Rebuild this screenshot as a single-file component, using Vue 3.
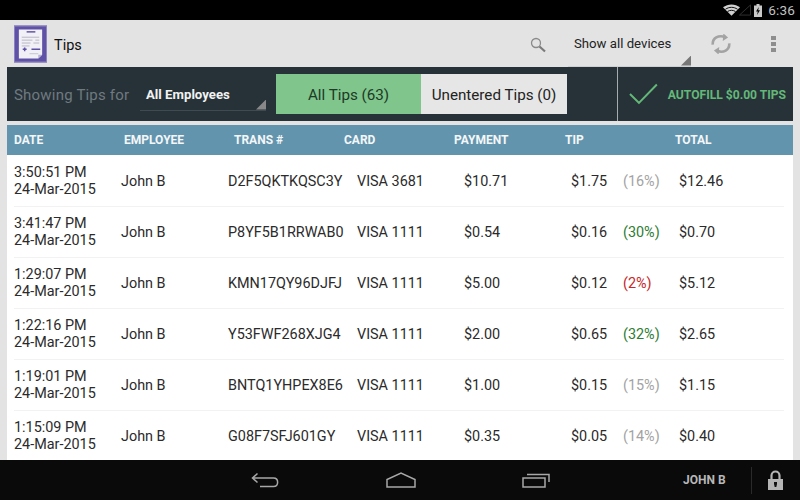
<script setup>
const headers = [
  { label: 'DATE', w: 110 }, { label: 'EMPLOYEE', w: 110 }, { label: 'TRANS #', w: 110 },
  { label: 'CARD', w: 110 }, { label: 'PAYMENT', w: 111 }, { label: 'TIP', w: 110 }, { label: 'TOTAL', w: 100 }
]
const rows = [
  ['3:50:51 PM', 'D2F5QKTKQSC3Y', 'VISA 3681', '$10.71', '$1.75', '(16%)', 'neutral', '$12.46'],
  ['3:41:47 PM', 'P8YF5B1RRWAB0', 'VISA 1111', '$0.54', '$0.16', '(30%)', 'good', '$0.70'],
  ['1:29:07 PM', 'KMN17QY96DJFJ', 'VISA 1111', '$5.00', '$0.12', '(2%)', 'bad', '$5.12'],
  ['1:22:16 PM', 'Y53FWF268XJG4', 'VISA 1111', '$2.00', '$0.65', '(32%)', 'good', '$2.65'],
  ['1:19:01 PM', 'BNTQ1YHPEX8E6', 'VISA 1111', '$1.00', '$0.15', '(15%)', 'neutral', '$1.15'],
  ['1:15:09 PM', 'G08F7SFJ601GY', 'VISA 1111', '$0.35', '$0.05', '(14%)', 'neutral', '$0.40']
].map(([time, trans, card, payment, tip, pct, tone, total]) => ({ time, trans, card, payment, tip, pct, tone, total }))
</script>

<template>
  <div class="screen">
    <header class="status">
      <svg width="17" height="12" viewBox="0 0 18 12" class="wifi"><path d="M9 12L0 3.2C5 -1 13 -1 18 3.2Z" fill="#d0d0d0"/><path d="M2.6 5.2C6.5 2.5 11.5 2.5 15.4 5.2M4.8 7.6C7.4 5.9 10.6 5.9 13.2 7.6" stroke="#000" stroke-width="1" fill="none"/></svg>
      <svg width="12" height="12" viewBox="0 0 13 12" class="signal"><path d="M0.5 11.5L12.5 0.5V11.5Z" fill="none" stroke="#333" stroke-width="1"/></svg>
      <svg width="8" height="13" viewBox="0 0 8 13" class="battery"><path d="M2.5 0h3v1.5H8V13H0V1.5h2.5Z" fill="#c9c9c9"/><path d="M4.8 3L2 7.6h1.8L3 11l3-4.8H4.2Z" fill="#000"/></svg>
      <span class="clock">6:36</span>
    </header>

    <div class="actionbar">
      <svg class="applogo" width="33" height="38" viewBox="0 0 34 38">
        <rect width="34" height="38" fill="#5f51a5"/>
        <rect x="0.5" y="0.5" width="33" height="37" fill="none" stroke="#8d84c0"/>
        <path d="M5 4H29V30L25 34H5Z" fill="#f1f0f6"/>
        <path d="M29 30L25 34V30Z" fill="#b9b4d6"/>
        <path d="M13 6.500H22" stroke="#5f51a5" stroke-width="1.500"/>
        <path d="M8 12H26M8 15H19M22 15H26M8 18H17M20 18H26M8 21H16" stroke="#a9a6b8" stroke-width="0.800"/>
        <path d="M9 24.500H13M11 22.500V26.500M18 24.500H27" stroke="#5f51a5" stroke-width="1.500"/>
        <path d="M16 29H25" stroke="#b9b7c6" stroke-width="0.800"/>
      </svg>
      <span class="title">Tips</span>
      <svg class="search" width="16" height="16" viewBox="0 0 16 16"><circle cx="6" cy="6" r="4.500" fill="none" stroke="#8a8a8a" stroke-width="1.300"/><path d="M9.500 9.500L15 14.500" stroke="#7a7a7a" stroke-width="2.200"/></svg>
      <div class="spinner devices"><span>Show all devices</span><i class="corner light"></i></div>
      <svg class="sync" width="20" height="20" viewBox="1.500 1.500 17 17" fill="none" stroke="#a3a3a3" stroke-width="2.200"><path d="M3 10.500C2.500 5 8 2 13.500 4.200"/><path d="M17 9.500C17.500 15 12 18 6.500 15.800"/><path d="M12 1L16 4.500L11.500 7.500Z" fill="#a3a3a3" stroke="none"/><path d="M8 19L4 15.500L8.500 12.500Z" fill="#a3a3a3" stroke="none"/></svg>
      <div class="overflow"><i></i><i></i><i></i></div>
    </div>

    <div class="filterbar">
      <span class="showing">Showing Tips for</span>
      <div class="spinner employees"><span>All Employees</span><i class="corner dark"></i></div>
      <div class="tabs">
        <div class="tab on">All Tips (63)</div>
        <div class="tab">Unentered Tips (0)</div>
      </div>
      <div class="autofill">
        <svg width="30" height="22" viewBox="0 0 30 22"><path d="M1 11L10 20L28 1.500" fill="none" stroke="#63b878" stroke-width="2"/></svg>
        <span>AUTOFILL $0.00 TIPS</span>
      </div>
    </div>

    <div class="tablehead">
      <span v-for="h in headers" :key="h.label" :style="{ width: h.w + 'px' }">{{ h.label }}</span>
    </div>

    <main class="rows">
      <div v-for="r in rows" :key="r.trans" class="row">
        <div class="c date">{{ r.time }}<br>24-Mar-2015</div>
        <div class="c emp">John B</div>
        <div class="c trans">{{ r.trans }}</div>
        <div class="c card">{{ r.card }}</div>
        <div class="c pay">{{ r.payment }}</div>
        <div class="c tip">{{ r.tip }}</div>
        <div class="c pct" :class="r.tone">{{ r.pct }}</div>
        <div class="c total">{{ r.total }}</div>
      </div>
    </main>

    <footer class="nav">
      <div class="navicons">
        <svg width="28" height="16" viewBox="0 0 28 16" fill="none" stroke="#a8a8a8" stroke-width="1.500"><path d="M6.500 1.500L1.500 6L6.500 10.500M1.500 6H22.500C28 6 28 14.500 22.500 14.500H9"/></svg>
        <svg width="30" height="16" viewBox="0 0 30 16" fill="none" stroke="#a8a8a8" stroke-width="1.500"><path d="M1 15V7.500L15 1L29 7.500V15Z"/></svg>
        <svg width="28" height="16" viewBox="0 0 28 16" fill="none" stroke="#a8a8a8" stroke-width="1.500"><path d="M1 6H23V15H1Z"/><path d="M5 2.500H27V10"/></svg>
      </div>
      <span class="user">JOHN B</span>
      <span class="sep"></span>
      <svg class="lock" width="15" height="20" viewBox="0 0 15 20"><path d="M3.500 9V5.500a4 4 0 0 1 8 0V9" fill="none" stroke="#b5b5b5" stroke-width="2.200"/><path d="M0 9H15V20H0Z" fill="#b5b5b5"/><path d="M6 12H9V14L8.300 17H6.700L6 14Z" fill="#111"/></svg>
    </footer>
  </div>
</template>

<style scoped>
.screen {
  width: 800px;
  height: 500px;
  overflow: hidden;
  display: flex;
  flex-direction: column;
  background: #e3e3e3;
  font-family: Roboto, "Liberation Sans", sans-serif;
  color: #222;
}
.status {
  flex: 0 0 20px;
  background: #000;
  display: flex;
  align-items: center;
  padding-right: 5px;
  justify-content: flex-end;
}
.wifi { margin-right: -1px; }
.signal { margin-right: 3px; }
.battery { margin-right: 6px; }
.clock { color: #c2c2c2; font-size: 13.500px; letter-spacing: 0.200px; }

.actionbar {
  flex: 0 0 47px;
  display: flex;
  align-items: center;
  padding-left: 14px;
  background: #e3e3e3;
}
.applogo { flex: none; }
.title { margin-left: 7px; padding-top: 3px; font-size: 14.500px; color: #111; flex: 1; }
.search { margin-right: 22px; margin-top: 2px; }
.spinner { position: relative; display: flex; align-items: center; box-sizing: border-box; }
.corner {
  position: absolute;
  right: 0;
  bottom: 0;
  width: 10px;
  height: 10px;
  clip-path: polygon(100% 0, 100% 100%, 0 100%);
}
.corner.light { background: #777; }
.corner.dark { background: #888; }
.devices {
  width: 123px;
  height: 41px;
  margin-top: 5px;
  padding: 0 0 4px 6px;
  font-size: 13.200px;
  color: #222;
  border-bottom: 1px solid #d0d0d0;
}
.sync { margin-left: 20px; margin-top: 1px; }
.overflow {
  margin-left: 40px;
  margin-right: 24px;
  margin-top: 1px;
  display: flex;
  flex-direction: column;
  gap: 2px;
}
.overflow i { display: block; width: 5px; height: 4px; background: #8e8e8e; }

.filterbar {
  flex: 0 0 54px;
  margin: 0 7px;
  background: #273238;
  display: flex;
  align-items: center;
  padding-left: 7px;
  box-sizing: border-box;
}
.showing { width: 119px; padding-top: 2px; color: #6f7a80; font-size: 15px; letter-spacing: 0.200px; }
.employees {
  width: 126px;
  height: 32px;
  margin-left: 7px;
  margin-top: 1px;
  padding: 0 0 0 6px;
  font-size: 13.200px;
  font-weight: 700;
  color: #f2f2f2;
  border-bottom: 1px solid #3f4b51;
}
.tabs { margin-left: 10px; display: flex; height: 40px; }
.tab {
  width: 146px;
  padding-top: 1px;
  box-sizing: border-box;
  display: flex;
  align-items: center;
  justify-content: center;
  background: #e6e6e6;
  font-size: 15.200px;
  color: #222;
  white-space: nowrap;
}
.tab.on { width: 145px; background: #7fc58c; color: #1c3a26; }
.autofill {
  align-self: stretch;
  margin-left: 50px;
  width: 169px;
  box-sizing: border-box;
  border-left: 1px solid #a6acaf;
  display: flex;
  align-items: center;
  padding-left: 11px;
  gap: 9px;
  color: #63b878;
  font-size: 12.100px;
  font-weight: 700;
  white-space: nowrap;
}
.autofill span { padding-top: 2px; }

.tablehead {
  flex: 0 0 30px;
  margin: 4px 7px 0;
  padding-left: 7px;
  background: #6394ad;
  display: flex;
  align-items: center;
  color: #f4f7f9;
  font-size: 12px;
  font-weight: 700;
}
.tablehead span { flex: none; }

.rows {
  flex: 1;
  min-height: 0;
  overflow: hidden;
  margin: 0 7px;
  padding: 1px 9px 0 7px;
  background: #fff;
}
.row {
  height: 51px;
  box-sizing: border-box;
  display: grid;
  grid-template-columns: 107px 107px 129px 107px 107px 52px 56px 100px;
  align-items: center;
  font-size: 14.400px;
  color: #2b2b2b;
  border-bottom: 1px solid #f2f2f2;
}
.c { white-space: nowrap; }
.date { line-height: 17px; }
.neutral { color: #a3a3a3; }
.good { color: #2e7d32; }
.bad { color: #c62828; }

.nav {
  flex: 0 0 40px;
  background: #0a0a0a;
  display: flex;
  align-items: center;
  position: relative;
  z-index: 1;
}
.navicons {
  margin-left: 251px;
  width: 299px;
  display: flex;
  justify-content: space-between;
}
.user { margin-left: 133px; width: 47px; color: #b8b8b8; font-size: 12px; font-weight: 700; white-space: nowrap; }
.sep { margin-left: 21px; width: 1px; height: 27px; background: #2a2a2a; }
.lock { margin-left: 16px; }
</style>

<style>
html, body { margin: 0; background: #e3e3e3; }
</style>
